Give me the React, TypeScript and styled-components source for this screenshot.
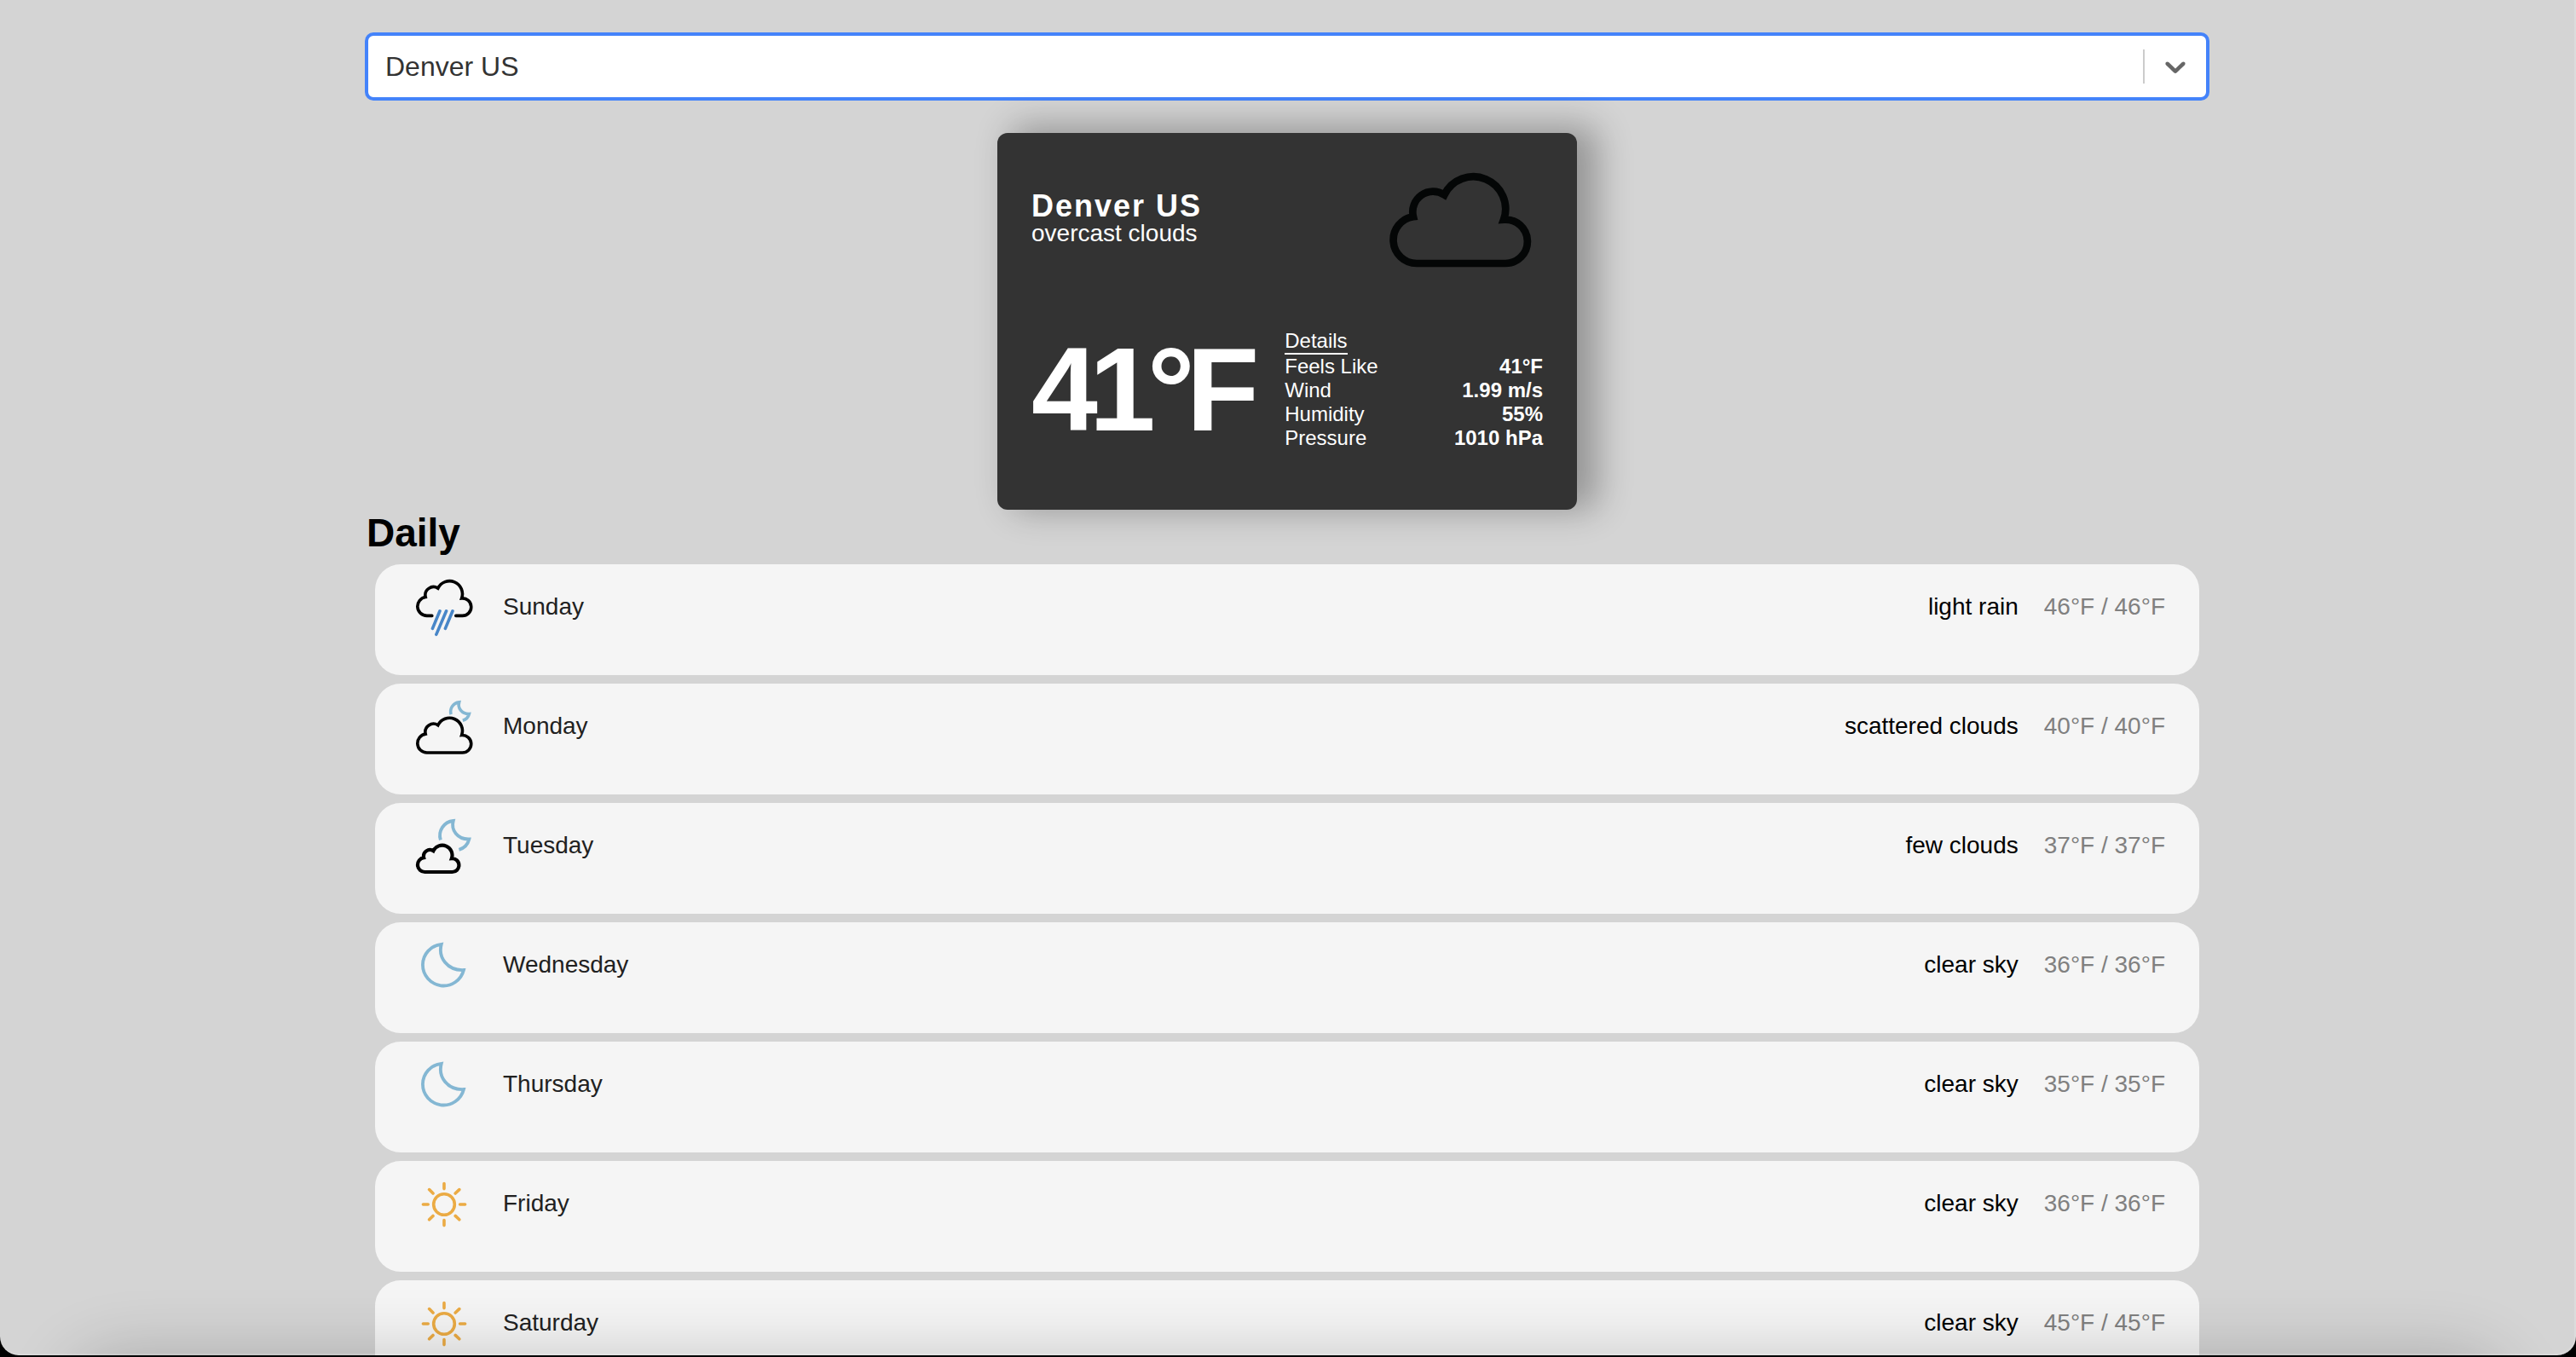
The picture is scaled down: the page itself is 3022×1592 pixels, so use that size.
import React, { useState } from "react";
import styled, { createGlobalStyle } from "styled-components";

const GlobalStyle = createGlobalStyle`
  *, *::before, *::after { box-sizing: border-box; }
  html, body { margin: 0; padding: 0; background: #000; }
  body, button, select {
    font-family: "Liberation Sans", Arial, Helvetica, sans-serif;
  }
`;

const Desktop = styled.div`
  height: 100vh;
  padding-bottom: 2px;
  background: #000;
  overflow: hidden;
`;

const Window = styled.div`
  position: relative;
  height: 100%;
  overflow: hidden;
  background: #d4d4d4;
  border-right: 2px solid #dcdcdc;
  border-radius: 0 0 22px 22px;
`;

const DockShadow = styled.div`
  position: absolute;
  left: 80px;
  right: 80px;
  top: 100%;
  height: 160px;
  border-radius: 60px;
  box-shadow: 0 0 80px rgba(0, 0, 0, 0.2);
  pointer-events: none;
`;

const WindowEdge = styled.div`
  position: absolute;
  inset: 0;
  border-bottom: 2px solid rgba(255, 255, 255, 0.15);
  border-radius: 0 0 22px 22px;
  pointer-events: none;
`;

const Page = styled.main`
  max-width: 2160px;
  margin: 40px auto;
`;

const Control = styled.div`
  display: flex;
  align-items: center;
  height: 76px;
  background: #fff;
  border: 2px solid #4483fa;
  border-radius: 8px;
  box-shadow: 0 0 0 2px #4483fa;
`;

const CitySelect = styled.select`
  flex: 1;
  height: 100%;
  padding: 0 20px;
  border: 0;
  outline: 0;
  appearance: none;
  background: transparent;
  color: #333;
  font-size: 32px;
`;

const Divider = styled.span`
  width: 2px;
  height: 40px;
  background: #ccc;
`;

const Indicator = styled.span`
  display: flex;
  padding: 16px;
  color: #666;
`;

const Card = styled.section`
  width: 680px;
  margin: 40px auto 0;
  padding: 0 40px 40px;
  border-radius: 12px;
  background: #333;
  color: #fff;
  box-shadow: 20px -4px 40px 4px rgba(0, 0, 0, 0.3);
`;

const CardRow = styled.div`
  display: flex;
  align-items: center;
  justify-content: space-between;
`;

const City = styled.h1`
  margin: 0;
  font-size: 36px;
  line-height: 36px;
  letter-spacing: 2px;
`;

const Description = styled.p`
  margin: 0;
  font-size: 28px;
  line-height: 28px;
`;

const Temperature = styled.p`
  margin: 20px 0;
  font-size: 140px;
  font-weight: 700;
  line-height: 162px;
  letter-spacing: -10px;
`;

const Details = styled.div`
  flex: 1;
  padding-left: 40px;
  font-size: 24px;
  line-height: 28px;
`;

const DetailsTitle = styled.h2`
  width: fit-content;
  margin: 0;
  border-bottom: 2px solid #fff;
  font-size: 24px;
  font-weight: 400;
`;

const DetailList = styled.dl`
  margin: 0;
`;

const Detail = styled.div`
  display: flex;
  justify-content: space-between;
`;

const DetailValue = styled.dd`
  margin: 0;
  font-weight: 700;
`;

const SectionTitle = styled.h2`
  margin: 0;
  font-size: 46px;
  line-height: 54px;
  color: #000;
`;

const Days = styled.ul`
  display: grid;
  gap: 10px;
  margin: 0;
  padding: 10px;
  list-style: none;
`;

const Day = styled.button`
  display: flex;
  align-items: center;
  width: 100%;
  padding: 10px 40px 40px;
  border: 0;
  border-radius: 30px;
  background: #f5f5f5;
  font-size: 28px;
  line-height: 30px;
  text-align: left;
  cursor: pointer;
`;

const DayName = styled.span`
  flex: 1;
  margin-left: 30px;
  color: #212121;
`;

const DaySummary = styled.span`
  margin-right: 30px;
  color: #000;
`;

const DayRange = styled.span`
  color: #808080;
`;

type Kind = "overcast" | "rain" | "scattered" | "few" | "moon" | "sun";

const MOON_BLUE = "#84b7d3";
const RAIN_BLUE = "#4886c8";
const SUN_ORANGE = "#ebab44";

// Top of the cloud, from the lower right corner round to the lower left one.
const CLOUD_TOP =
  "A25.7 25.7 0 1 0 154 101.7A37.75 37.75 0 0 0 84.5 72.5A24 24 0 0 0 48 98.3A27.5 27.5 0 0 0 51.9 153";
const CLOUD = `M51.9 153H155.6${CLOUD_TOP}Z`;
const OPEN_CLOUD = `M137 153H155.6${CLOUD_TOP}H67`;
const MOON = "M94.5 39.5C84 78 112 117 160 115A61 61 0 1 1 94.5 39.5Z";
const OPEN_MOON =
  "M42 118.5A61 61 0 0 1 94.5 39.5C84 78 112 117 160 115A61 61 0 0 1 118 158.5";

const drawings: Record<Kind, React.ReactNode> = {
  overcast: <path d={CLOUD} stroke="#040606" strokeWidth="8.7" />,
  rain: (
    <>
      <path d={OPEN_CLOUD} transform="translate(0 -27)" stroke="#000" strokeWidth="9" strokeLinecap="round" />
      <path d="M90 112L68.5 163.5M109 112L79.5 181M127.5 112L106 163.5" stroke={RAIN_BLUE} strokeWidth="9" strokeLinecap="round" />
    </>
  ),
  scattered: (
    <>
      <path d={OPEN_MOON} transform="translate(104 12) scale(0.45)" stroke={MOON_BLUE} strokeWidth="20" />
      <path d={CLOUD} transform="translate(0 24.5)" stroke="#000" strokeWidth="9" />
    </>
  ),
  few: (
    <>
      <path d={OPEN_MOON} transform="translate(62.3 -0.5) scale(0.71)" stroke={MOON_BLUE} strokeWidth="13.5" />
      <path d={CLOUD} transform="translate(6 59.7) scale(0.77)" stroke="#000" strokeWidth="13.5" />
    </>
  ),
  moon: <path d={MOON} stroke={MOON_BLUE} strokeWidth="9.5" />,
  sun: (
    <g stroke={SUN_ORANGE} strokeWidth="9" strokeLinecap="round">
      <circle cx="102.5" cy="102.5" r="30.8" />
      <path d="M102.5 41.5V56.5M102.5 149V164M41 102.5H55.5M149 102.5H164M59 59L70 70M135.5 70L147 59M70 136L59 147M135.5 136L147 147" />
    </g>
  ),
};

const WeatherIcon = ({ kind, size }: { kind: Kind; size: number }) => (
  <svg width={size} height={size} viewBox="0 0 200 200" fill="none" aria-hidden="true">
    {drawings[kind]}
  </svg>
);

const days: { day: string; kind: Kind; text: string; temp: string }[] = [
  { day: "Sunday", kind: "rain", text: "light rain", temp: "46°F / 46°F" },
  { day: "Monday", kind: "scattered", text: "scattered clouds", temp: "40°F / 40°F" },
  { day: "Tuesday", kind: "few", text: "few clouds", temp: "37°F / 37°F" },
  { day: "Wednesday", kind: "moon", text: "clear sky", temp: "36°F / 36°F" },
  { day: "Thursday", kind: "moon", text: "clear sky", temp: "35°F / 35°F" },
  { day: "Friday", kind: "sun", text: "clear sky", temp: "36°F / 36°F" },
  { day: "Saturday", kind: "sun", text: "clear sky", temp: "45°F / 45°F" },
];

const details = [
  ["Feels Like", "41°F"],
  ["Wind", "1.99 m/s"],
  ["Humidity", "55%"],
  ["Pressure", "1010 hPa"],
];

export default function App() {
  const [city, setCity] = useState("Denver US");
  return (
    <Desktop>
      <GlobalStyle />
      <Window>
        <Page>
          <Control>
            <CitySelect aria-label="City" value={city} onChange={(e) => setCity(e.target.value)}>
              <option>Denver US</option>
            </CitySelect>
            <Divider />
            <Indicator>
              <svg width="40" height="40" viewBox="0 0 20 20" fill="currentColor" aria-hidden="true">
                <path d="M4.516 7.548c0.436-0.446 1.043-0.481 1.576 0l3.908 3.747 3.908-3.747c0.533-0.481 1.141-0.446 1.574 0 0.436 0.445 0.408 1.197 0 1.615-0.406 0.418-4.695 4.502-4.695 4.502-0.217 0.223-0.502 0.335-0.787 0.335s-0.57-0.112-0.789-0.335c0 0-4.287-4.084-4.695-4.502s-0.436-1.17 0-1.615z" />
              </svg>
            </Indicator>
          </Control>
          <Card>
            <CardRow>
              <div>
                <City>{city}</City>
                <Description>overcast clouds</Description>
              </div>
              <WeatherIcon kind="overcast" size={200} />
            </CardRow>
            <CardRow>
              <Temperature>41°F</Temperature>
              <Details>
                <DetailsTitle>Details</DetailsTitle>
                <DetailList>
                  {details.map(([name, value]) => (
                    <Detail key={name}>
                      <dt>{name}</dt>
                      <DetailValue>{value}</DetailValue>
                    </Detail>
                  ))}
                </DetailList>
              </Details>
            </CardRow>
          </Card>
          <SectionTitle>Daily</SectionTitle>
          <Days>
            {days.map((d) => (
              <li key={d.day}>
                <Day type="button">
                  <WeatherIcon kind={d.kind} size={80} />
                  <DayName>{d.day}</DayName>
                  <DaySummary>{d.text}</DaySummary>
                  <DayRange>{d.temp}</DayRange>
                </Day>
              </li>
            ))}
          </Days>
        </Page>
        <DockShadow />
        <WindowEdge />
      </Window>
    </Desktop>
  );
}
